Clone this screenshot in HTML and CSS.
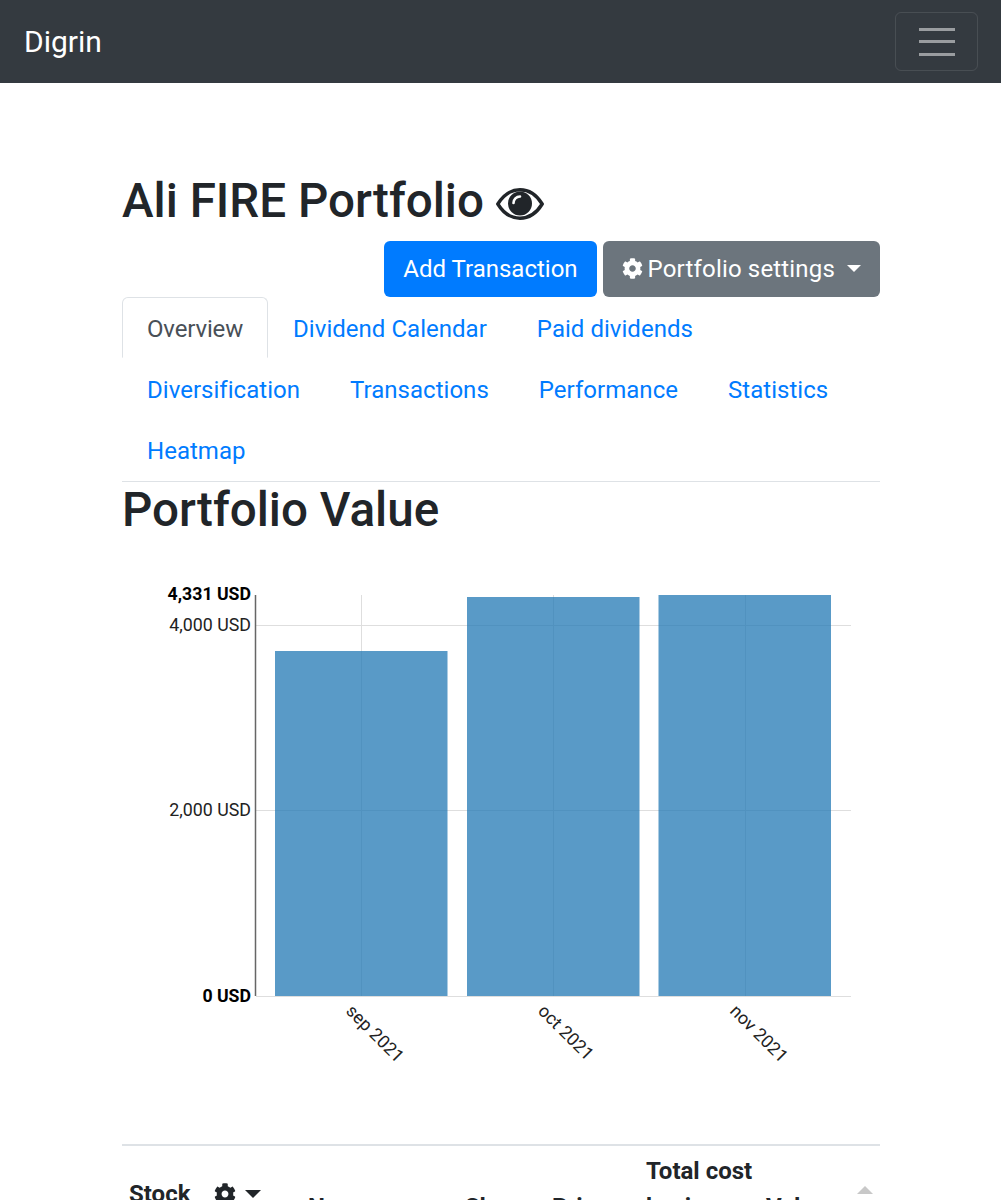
FILE: index.html
```html
<!DOCTYPE html>
<html lang="en">
<head>
<meta charset="utf-8">
<title>Digrin</title>
<link rel="stylesheet" href="styles.css">
</head>
<body>
<div class="page">
  <nav class="navbar">
    <a class="brand">Digrin</a>
    <button class="toggler"><span class="bar"></span><span class="bar"></span><span class="bar"></span></button>
  </nav>
  <main class="container">
    <h1 class="title">Ali FIRE Portfolio
      <svg class="eye" viewBox="0 0 48 32"><path d="M1.8 16C8 6 16 1.8 24 1.8S40 6 46.2 16C40 26 32 30.2 24 30.2S8 26 1.8 16Z" fill="none" stroke="#212529" stroke-width="3.4"/><circle cx="24" cy="15.5" r="12" fill="#212529"/><path d="M17.5 15A6.5 6.5 0 0 1 24 8.5" fill="none" stroke="#fff" stroke-width="2.6" stroke-linecap="round"/></svg>
    </h1>
    <div class="actions">
      <a class="btn btn-primary">Add Transaction</a>
      <a class="btn btn-secondary">
        <svg class="gear" viewBox="0 0 512 512"><path fill="currentColor" d="M487.4 315.7l-42.6-24.6c4.3-23.2 4.3-47 0-70.2l42.6-24.6c4.9-2.8 7.1-8.6 5.5-14-11.1-35.6-30-67.8-54.7-94.6-3.8-4.1-10-5.1-14.8-2.3L380.8 110c-17.9-15.4-38.5-27.3-60.8-35.1V25.8c0-5.6-3.9-10.5-9.4-11.7-36.7-8.2-74.3-7.8-109.2 0-5.5 1.2-9.4 6.1-9.4 11.7V75c-22.2 7.9-42.8 19.8-60.8 35.1L88.7 85.5c-4.9-2.8-11-1.9-14.8 2.3-24.7 26.7-43.6 58.9-54.7 94.6-1.7 5.4.6 11.2 5.5 14L67.3 221c-4.3 23.2-4.3 47 0 70.2l-42.6 24.6c-4.9 2.8-7.1 8.6-5.5 14 11.1 35.6 30 67.8 54.7 94.6 3.8 4.1 10 5.1 14.8 2.3l42.6-24.6c17.9 15.4 38.5 27.3 60.8 35.1v49.2c0 5.6 3.9 10.5 9.4 11.7 36.7 8.2 74.3 7.8 109.2 0 5.5-1.2 9.4-6.1 9.4-11.7v-49.2c22.2-7.9 42.8-19.8 60.8-35.1l42.6 24.6c4.9 2.8 11 1.9 14.8-2.3 24.7-26.7 43.6-58.9 54.7-94.6 1.5-5.5-.7-11.3-5.6-14.1zM256 336c-44.1 0-80-35.9-80-80s35.9-80 80-80 80 35.9 80 80-35.9 80-80 80z"/></svg>
        Portfolio settings<span class="caret"></span>
      </a>
    </div>
    <ul class="tabs">
      <li class="tab active">Overview</li>
      <li class="tab">Dividend Calendar</li>
      <li class="tab">Paid dividends</li>
      <li class="tab">Diversification</li>
      <li class="tab">Transactions</li>
      <li class="tab">Performance</li>
      <li class="tab">Statistics</li>
      <li class="tab">Heatmap</li>
    </ul>
    <h2 class="section-title">Portfolio Value</h2>
    <svg class="chart" viewBox="122 539 758 605">
      <g class="grid">
        <line x1="256" x2="851" y1="625.5" y2="625.5"/>
        <line x1="256" x2="851" y1="810.5" y2="810.5"/>
        <line x1="256" x2="851" y1="996.5" y2="996.5"/>
        <line x1="361.5" x2="361.5" y1="595" y2="996"/>
        <line x1="553.5" x2="553.5" y1="595" y2="996"/>
        <line x1="745.5" x2="745.5" y1="595" y2="996"/>
      </g>
      <g class="bars">
        <rect x="275" y="651" width="172.5" height="345"/>
        <rect x="467" y="597" width="172.5" height="399"/>
        <rect x="658.5" y="595" width="172.5" height="401"/>
      </g>
      <line class="axis" x1="255.5" x2="255.5" y1="595" y2="996"/>
      <g class="ylabels">
        <text class="strong" x="251" y="600">4,331 USD</text>
        <text x="251" y="631">4,000 USD</text>
        <text x="251" y="816">2,000 USD</text>
        <text class="strong" x="251" y="1002">0 USD</text>
      </g>
      <g class="xlabels">
        <text transform="translate(345 1012) rotate(45)">sep 2021</text>
        <text transform="translate(537 1012) rotate(45)">oct 2021</text>
        <text transform="translate(729 1012) rotate(45)">nov 2021</text>
      </g>
    </svg>
    <table class="table">
      <colgroup><col class="c-stock"><col class="c-name"><col class="c-shares"><col class="c-price"><col class="c-cost"><col class="c-value"></colgroup>
      <thead>
        <tr>
          <th class="th-stock"><span class="stock-head">Stock
            <span class="stock-tools">
              <svg class="gear gear-dark" viewBox="0 0 512 512"><path fill="currentColor" d="M487.4 315.7l-42.6-24.6c4.3-23.2 4.3-47 0-70.2l42.6-24.6c4.9-2.8 7.1-8.6 5.5-14-11.1-35.6-30-67.8-54.7-94.6-3.8-4.1-10-5.1-14.8-2.3L380.8 110c-17.9-15.4-38.5-27.3-60.8-35.1V25.8c0-5.6-3.9-10.5-9.4-11.7-36.7-8.2-74.3-7.8-109.2 0-5.5 1.2-9.4 6.1-9.4 11.7V75c-22.2 7.9-42.8 19.8-60.8 35.1L88.7 85.5c-4.9-2.8-11-1.9-14.8 2.3-24.7 26.7-43.6 58.9-54.7 94.6-1.7 5.4.6 11.2 5.5 14L67.3 221c-4.3 23.2-4.3 47 0 70.2l-42.6 24.6c-4.9 2.8-7.1 8.6-5.5 14 11.1 35.6 30 67.8 54.7 94.6 3.8 4.1 10 5.1 14.8 2.3l42.6-24.6c17.9 15.4 38.5 27.3 60.8 35.1v49.2c0 5.6 3.9 10.5 9.4 11.7 36.7 8.2 74.3 7.8 109.2 0 5.5-1.2 9.4-6.1 9.4-11.7v-49.2c22.2-7.9 42.8-19.8 60.8-35.1l42.6 24.6c4.9 2.8 11 1.9 14.8-2.3 24.7-26.7 43.6-58.9 54.7-94.6 1.5-5.5-.7-11.3-5.6-14.1zM256 336c-44.1 0-80-35.9-80-80s35.9-80 80-80 80 35.9 80 80-35.9 80-80 80z"/></svg>
              <span class="caret caret-dark"></span>
            </span></span></th>
          <th>Name</th>
          <th>Shares</th>
          <th>Price</th>
          <th>Total cost basis</th>
          <th class="th-sorted">Value<span class="sort-up"></span></th>
        </tr>
      </thead>
    </table>
  </main>
</div>
</body>
</html>
```

FILE: styles.css
```css
* { box-sizing: border-box; }
html, body { margin: 0; padding: 0; }
body {
  font-family: Roboto, "Liberation Sans", sans-serif;
  font-size: 24px;
  line-height: 36px;
  color: #212529;
  background: #fff;
}
.page { height: 1200px; overflow: hidden; }

.navbar {
  height: 83px;
  background: #343a40;
  display: flex;
  align-items: center;
  justify-content: space-between;
  padding: 0 23px 0 24px;
}
.brand { color: #fff; font-size: 30px; line-height: 45px; }
.toggler {
  width: 83px;
  height: 59px;
  padding: 0;
  background: transparent;
  border: 1px solid rgba(255,255,255,.1);
  border-radius: 6px;
  display: flex;
  flex-direction: column;
  align-items: center;
  justify-content: center;
  gap: 9.5px;
}
.bar { width: 36px; height: 3px; background: rgba(255,255,255,.5); }

.container { width: 758px; margin-left: 122px; padding-top: 90px; }
.title, .section-title {
  margin: 0;
  font-size: 47.6px;
  line-height: 57.6px;
  font-weight: 500;
}
.title { margin-bottom: 10px; }
.eye { width: 48px; height: 32px; vertical-align: -3px; }

.actions { display: flex; justify-content: flex-end; gap: 6px; }
.btn {
  height: 56px;
  display: flex;
  align-items: center;
  padding: 0 19px;
  border-radius: 6px;
  color: #fff;
}
.btn-primary { background: #007bff; }
.btn-secondary { background: #6c757d; letter-spacing: .17px; }
.gear { width: 21px; height: 21px; margin-right: 5px; }
.caret {
  margin-left: 12px;
  border-top: 7px solid currentColor;
  border-left: 7px solid transparent;
  border-right: 7px solid transparent;
}

.tabs {
  list-style: none;
  margin: 0;
  padding: 0 0 1px;
  display: flex;
  flex-wrap: wrap;
  border-bottom: 1px solid #dee2e6;
}
.tab {
  padding: 13px 24px 11px;
  border: 1px solid transparent;
  color: #007bff;
  height: 61px;
  letter-spacing: .03px;
}
.tab.active {
  color: #495057;
  background: #fff;
  border-color: #dee2e6 #dee2e6 #fff;
  border-radius: 6px 6px 0 0;
  letter-spacing: -.15px;
}

.chart { display: block; width: 758px; height: 605px; }
.grid line { stroke: #dedede; stroke-width: 1; }
.bars rect { fill: #1f77b4; fill-opacity: .74; }
.axis { stroke: #666; stroke-width: 1.5; }
.ylabels text, .xlabels text { font-size: 17.8px; fill: #222; }
.ylabels text { text-anchor: end; }
.ylabels .strong { font-size: 17.7px; font-weight: 700; fill: #000; }

.table {
  width: 758px;
  table-layout: fixed;
  border-collapse: collapse;
  border-top: 2px solid #dee2e6;
}
.c-stock { width: 179px; }
.c-name { width: 157px; }
.c-shares { width: 87px; }
.c-price { width: 94px; }
.c-cost { width: 120px; }
.c-value { width: 121px; }
.table th {
  padding: 7px 0 7px 7px;
  text-align: left;
  vertical-align: bottom;
  font-weight: 700;
  position: relative;
}
.table .th-stock { padding-bottom: 20px; }
.stock-head { display: flex; align-items: center; }
.stock-tools { display: flex; align-items: center; margin-left: 24px; }
.gear-dark { width: 22px; height: 22px; margin-right: 0; color: #212529; }
.caret-dark { margin-left: 9px; border-width: 8px 8px 0; color: #212529; }
.sort-up {
  position: absolute;
  right: 7px;
  top: 40px;
  border-bottom: 8px solid #c8c8c8;
  border-left: 8px solid transparent;
  border-right: 8px solid transparent;
}
```
